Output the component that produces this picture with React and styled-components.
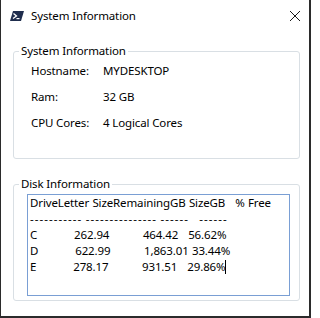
import React from "react";
import styled, { createGlobalStyle } from "styled-components";

const Global = createGlobalStyle`
  html, body { margin: 0; padding: 0; background: #ffffff; }
  body { font-family: "Segoe UI", "Noto Sans", "Liberation Sans", sans-serif; }
`;

const Window = styled.div`
  box-sizing: border-box;
  width: 311px;
  height: 318px;
  background: #ffffff;
  border-left: 1px solid #2b2b2b;
  border-right: 2px solid #2b2b2b;
  border-bottom: 2px solid #2b2b2b;
  display: flex;
  flex-direction: column;
  color: #000;
  font-size: 11.5px;
  letter-spacing: -0.13px;
`;

const TitleBar = styled.div`
  height: 31px;
  display: flex;
  align-items: center;
  padding: 0 8px 0 9px;
  gap: 7px;
`;

const Title = styled.div`
  flex: 1;
  line-height: 16px;
  color: #000;
`;

const CloseButton = styled.div`
  width: 12px;
  height: 12px;
  display: flex;
  align-items: center;
  justify-content: center;
`;

const Body = styled.div`
  display: flex;
  flex-direction: column;
  padding: 12px 9px 0 12px;
  gap: 17px;
`;

const Group = styled.fieldset`
  margin: 0;
  padding: 0 0 ${(p) => p.$padBottom}px 0;
  border: 1px solid #d9dfe4;
  border-radius: 3px;
  min-width: 0;
`;

const Legend = styled.legend`
  margin-left: 5px;
  padding: 0 2px;
  line-height: 16px;
`;

const Rows = styled.div`
  display: flex;
  flex-direction: column;
  gap: 10px;
  padding: 4px 0 0 17px;
`;

const Row = styled.div`
  display: grid;
  grid-template-columns: 72px 1fr;
  line-height: 16px;
`;

const TextBox = styled.div`
  box-sizing: border-box;
  margin: 2px 9px 0 13px;
  height: 102px;
  border: 1px solid #7a9fd4;
  padding: 0 2px;
  white-space: pre;
  line-height: 16px;
  word-spacing: 0.5px;
  overflow: hidden;
`;

const Dashes = styled.span`
  letter-spacing: 1.05px;
  word-spacing: -0.6px;
`;

const Caret = styled.span`
  display: inline-block;
  width: 1px;
  height: 14px;
  background: #000;
  vertical-align: -3px;
`;

const PsIcon = () => (
  <svg width="14" height="12" viewBox="0 0 14 12">
    <polygon points="3,1 14,1 11,11 0,11" fill="#1f2d4d" />
    <polyline points="3.5,3.5 6.5,6 3,8.5" fill="none" stroke="#fff" strokeWidth="1.3" />
    <line x1="6.5" y1="8.6" x2="9.5" y2="8.6" stroke="#fff" strokeWidth="1.2" />
  </svg>
);

const CloseIcon = () => (
  <svg width="12" height="12" viewBox="0 0 12 12">
    <path d="M1 1 L11 11 M11 1 L1 11" stroke="#1a1a1a" strokeWidth="1" fill="none" />
  </svg>
);

const info = [
  ["Hostname:", "MYDESKTOP"],
  ["Ram:", "32 GB"],
  ["CPU Cores:", "4 Logical Cores"],
];

const header = "DriveLetter SizeRemainingGB SizeGB   % Free\n";
const rule = "----------- --------------- ------   ------";
const rows =
  "\nC           262.94          464.42   56.62%\n" +
  "D           622.99          1,863.01 33.44%\n" +
  "E           278.17          931.51   29.86%";

export default function App() {
  return (
    <>
      <Global />
      <Window>
        <TitleBar>
          <PsIcon />
          <Title>System Information</Title>
          <CloseButton>
            <CloseIcon />
          </CloseButton>
        </TitleBar>
        <Body>
          <Group $padBottom={27}>
            <Legend>System Information</Legend>
            <Rows>
              {info.map(([k, v]) => (
                <Row key={k}>
                  <span>{k}</span>
                  <span>{v}</span>
                </Row>
              ))}
            </Rows>
          </Group>
          <Group $padBottom={4}>
            <Legend>Disk Information</Legend>
            <TextBox role="textbox">
              {header}
              <Dashes>{rule}</Dashes>
              {rows}
              <Caret />
            </TextBox>
          </Group>
        </Body>
      </Window>
    </>
  );
}
